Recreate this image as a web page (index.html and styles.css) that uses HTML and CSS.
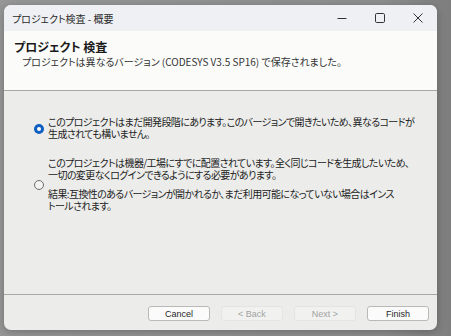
FILE: index.html
```html
<!DOCTYPE html>
<html lang="ja">
  <head>
    <meta charset="UTF-8" />
    <meta name="viewport" content="width=device-width, initial-scale=1.0" />
    <title>プロジェクト検査 - 概要</title>
    <link rel="stylesheet" href="styles.css">
  </head>
  <body>
    <div class="window">
      <div class="titlebar">
        <span class="title">プロジェクト検査 - 概要</span>
        <div class="controls">
          <span class="ctrl">
            <svg width="10" height="10" viewBox="0 0 10 10"><path d="M0.5 5.5h9" stroke="#333" stroke-width="1" /></svg>
          </span>
          <span class="ctrl">
            <svg width="10" height="10" viewBox="0 0 10 10"><rect x="0.5" y="0.5" width="9" height="9" rx="1.2" fill="none" stroke="#333" stroke-width="1" /></svg>
          </span>
          <span class="ctrl">
            <svg width="10" height="10" viewBox="0 0 10 10"><path d="M0.5 0.5l9 9M9.5 0.5l-9 9" stroke="#333" stroke-width="1" /></svg>
          </span>
        </div>
      </div>

      <div class="header">
        <h1>プロジェクト 検査</h1>
        <p>プロジェクトは異なるバージョン (CODESYS V3.5 SP16) で保存されました。</p>
      </div>

      <div class="content">
        <label class="option first">
          <span class="radio checked"></span>
          <span class="text">
            <span class="para">このプロジェクトはまだ開発段階にあります。このバージョンで開きたいため、異なるコードが生成されても構いません。</span>
          </span>
        </label>

        <label class="option">
          <span class="radio"></span>
          <span class="text">
            <span class="para">このプロジェクトは機器/工場にすでに配置されています。全く同じコードを生成したいため、一切の変更なくログインできるようにする必要があります。</span>
            <span class="para result">結果:互換性のあるバージョンが開かれるか、まだ利用可能になっていない場合はインストールされます。</span>
          </span>
        </label>
      </div>

      <div class="footer">
        <button class="btn">Cancel</button>
        <button class="btn" disabled>&lt; Back</button>
        <button class="btn" disabled>Next &gt;</button>
        <button class="btn">Finish</button>
      </div>
    </div>
  </body>
</html>
```

FILE: styles.css
```css
body {
  margin: 0;
  background: linear-gradient(to right, #979797, #8e8e8e 85%, #7e7e7e);
  font-family: "Noto Sans CJK JP", "Noto Sans", sans-serif;
  font-feature-settings: "palt";
  color: #1a1a1a;
  height: 336px;
  overflow: hidden;
}

.window {
  margin: 5px 0 0 4px;
  width: 433px;
  height: 325px;
  background: #ecedeb;
  border-radius: 7px;
  overflow: hidden;
  display: flex;
  flex-direction: column;
  box-shadow: 0 2px 8px rgba(0, 0, 0, 0.25);
}

.titlebar {
  height: 26px;
  background: #eff0f4;
  display: flex;
  align-items: center;
  justify-content: space-between;
  padding-left: 8px;
}

.title {
  font-size: 10px;
  color: #2a2a2a;
}

.controls {
  display: flex;
  height: 100%;
}

.ctrl {
  width: 38px;
  display: flex;
  align-items: center;
  justify-content: center;
}

.header {
  height: 60px;
  background: #fbfcfa;
  border-bottom: 1px solid #a8a9a7;
  box-sizing: border-box;
  padding: 8px 10px;
}

h1 {
  margin: 0;
  font-size: 12px;
  font-weight: bold;
  line-height: 16px;
}

.header p {
  margin: 0 0 0 8px;
  font-size: 10px;
  line-height: 14px;
  color: #333;
}

.content {
  flex: 1;
  padding: 25px 20px 0 30px;
  display: flex;
  flex-direction: column;
  gap: 17px;
}

.option {
  display: flex;
  align-items: center;
  gap: 4px;
}

.option.first .radio {
  margin-top: 2px;
}

.radio {
  width: 10px;
  height: 10px;
  border-radius: 50%;
  border: 1px solid #6e6e6e;
  box-sizing: border-box;
  flex-shrink: 0;
  background: #f3f3f3;
}

.radio.checked {
  border: 3px solid #0f5fc2;
  background: #fff;
}

.text {
  display: flex;
  flex-direction: column;
  gap: 7px;
  font-size: 10px;
  line-height: 12px;
  letter-spacing: -0.6px;
  color: #222;
}

.result {
  max-width: 348px;
}

.footer {
  height: 36px;
  border-top: 1px solid #a8a9a7;
  display: flex;
  justify-content: flex-end;
  align-items: flex-start;
  gap: 11px;
  padding: 11px 8px 0 0;
  box-sizing: border-box;
}

.btn {
  width: 62px;
  height: 15px;
  padding: 0;
  font-family: "Liberation Sans", sans-serif;
  font-size: 9px;
  background: #fbfbfb;
  border: 1px solid #b9bab8;
  border-radius: 3px;
  color: #1f1f1f;
}

.btn:disabled {
  background: #f1f2f0;
  border-color: #e4e5e3;
  color: #a2a2a2;
}
```
